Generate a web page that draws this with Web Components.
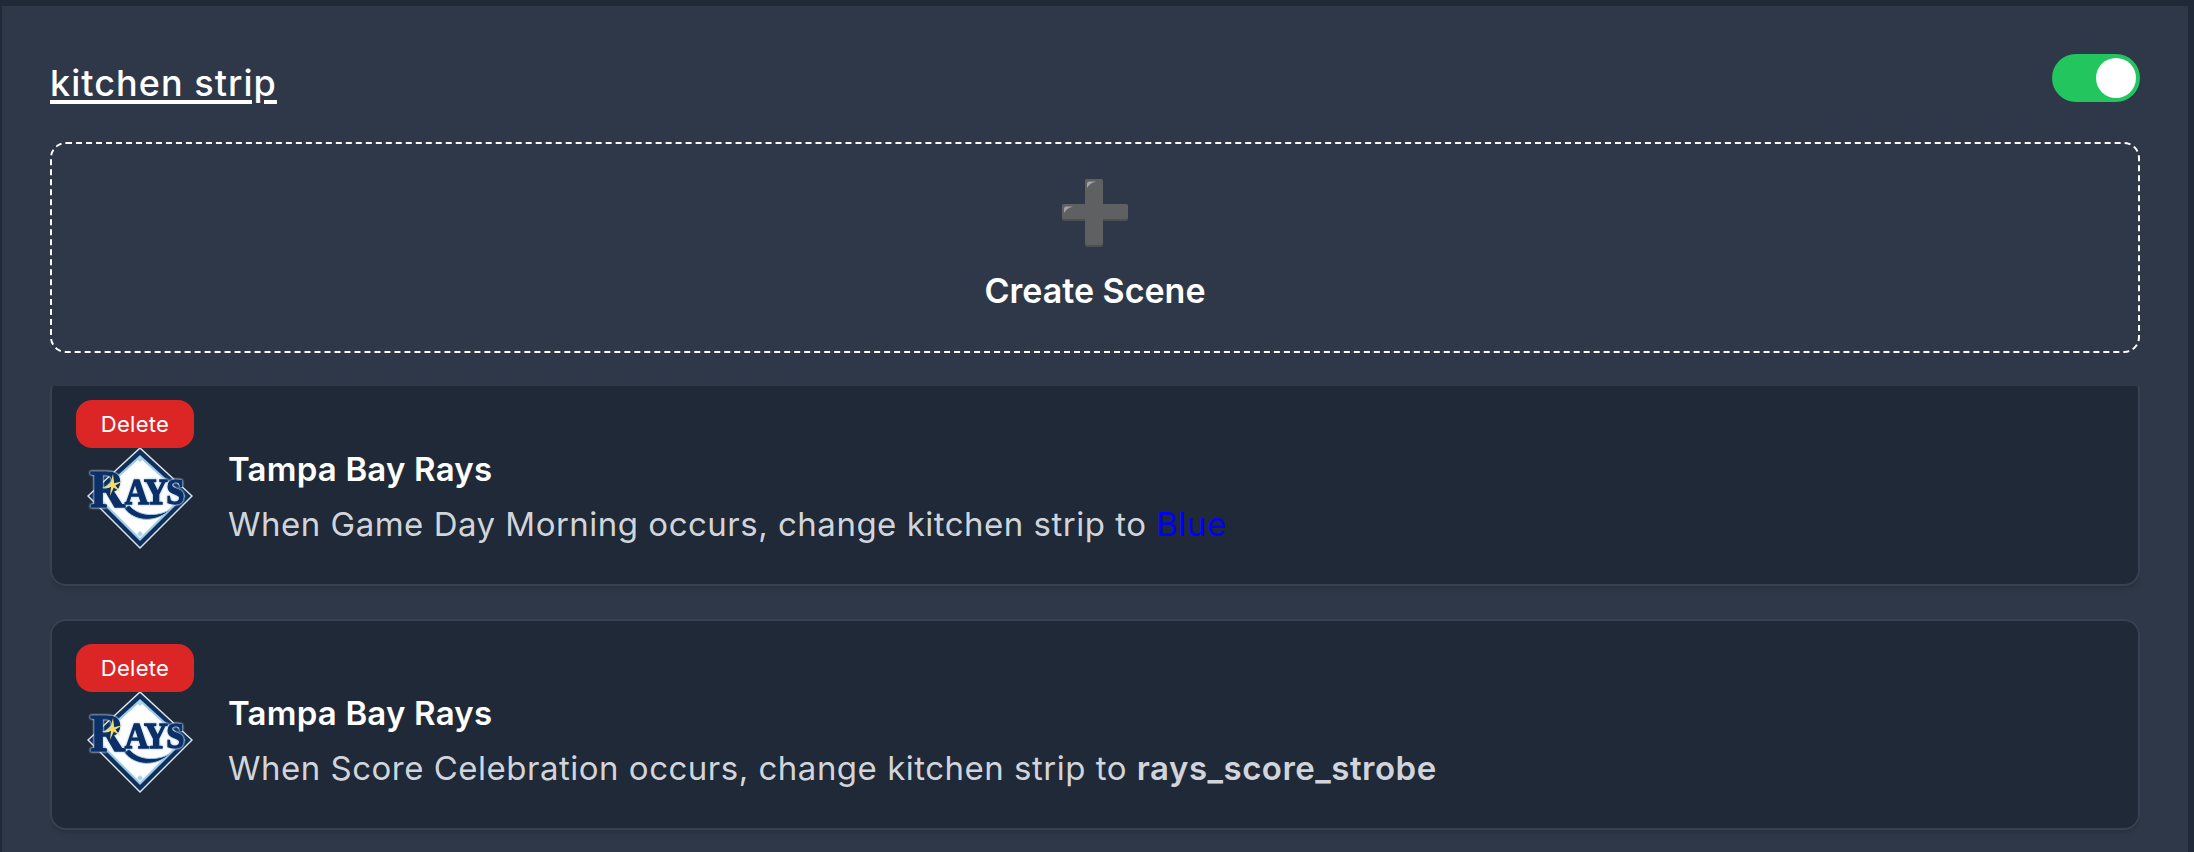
<!DOCTYPE html>
<html>
<head>
<meta charset="utf-8">
<title>kitchen strip</title>
<style>
  html, body { margin: 0; height: 100%; overflow: hidden; background: #1f2937; }
  body { padding: 6px 6px 0 2px; box-sizing: border-box; font-family: Inter, "Noto Sans", sans-serif; }
</style>
</head>
<body>
<device-panel name="kitchen strip">
  <create-scene></create-scene>
  <scene-list>
    <scene-card name="Tampa Bay Rays">When Game Day Morning occurs, change kitchen strip to <span style="color:#0000ff">Blue</span></scene-card>
    <scene-card name="Tampa Bay Rays">When Score Celebration occurs, change kitchen strip to <b style="font-weight:600">rays_score_strobe</b></scene-card>
  </scene-list>
</device-panel>

<script>
const fontStack = 'Inter, "Noto Sans", sans-serif';

class ToggleSwitch extends HTMLElement {
  constructor() {
    super();
    this.attachShadow({ mode: "open" });
    this.shadowRoot.innerHTML = `
      <style>
        :host { display: flex; justify-content: flex-end; align-items: center; box-sizing: border-box; width: 88px; height: 48px; padding-right: 4px; background: #22c55e; border-radius: 24px; }
        .knob { width: 40px; height: 40px; border-radius: 50%; background: #fff; }
      </style>
      <div class="knob"></div>`;
  }
}

class DevicePanel extends HTMLElement {
  constructor() {
    super();
    this.attachShadow({ mode: "open" });
    this.shadowRoot.innerHTML = `
      <style>
        :host { display: block; box-sizing: border-box; height: 846px; padding: 48px 48px 0; background: #2f3849; overflow: hidden; font-family: ${fontStack}; }
        header { display: flex; justify-content: space-between; align-items: center; height: 48px; margin-bottom: 40px; }
        h2 { margin: 10px 0 0; font-size: 36px; font-weight: 500; color: #fff; text-decoration: underline; text-decoration-thickness: 4px; text-underline-offset: 4px; letter-spacing: 1.05px; }
      </style>
      <header><h2></h2><toggle-switch></toggle-switch></header>
      <slot></slot>`;
  }
  connectedCallback() {
    this.shadowRoot.querySelector("h2").textContent = this.getAttribute("name");
  }
}

class CreateScene extends HTMLElement {
  constructor() {
    super();
    this.attachShadow({ mode: "open" });
    this.shadowRoot.innerHTML = `
      <style>
        :host { display: flex; flex-direction: column; align-items: center; box-sizing: border-box; height: 211px; padding-top: 35px; border: 2px dashed #fff; border-radius: 16px; color: #fff; }
        svg { display: block; }
        span { margin-top: 23px; font-size: 34px; font-weight: 600; }
      </style>
      <svg width="66" height="68" viewBox="0 0 66 68">
        <path d="M23 2a2 2 0 0 1 2-2h14a2 2 0 0 1 2 2v23h23a2 2 0 0 1 2 2v13a2 2 0 0 1-2 2H41v24a2 2 0 0 1-2 2H25a2 2 0 0 1-2-2V42H2a2 2 0 0 1-2-2V27a2 2 0 0 1 2-2h21z" fill="#4e4f51"/>
        <path d="M23 2a2 2 0 0 1 2-2h14a2 2 0 0 1 2 2v23h23a2 2 0 0 1 2 2v11a2 2 0 0 1-2 2H41v24a2 2 0 0 1-2 2H25a2 2 0 0 1-2-2V40H2a2 2 0 0 1-2-2V27a2 2 0 0 1 2-2h21z" fill="#5f6062"/>
        <path d="M25 9V5c0-1.500 1-2.500 2.500-2.500H34c-4 1-7 3-9 6.500zM2 34v-4c0-1.500 1-2.500 2.500-2.500H11c-4 1-7 3-9 6.500z" fill="#a3a3a6"/>
      </svg>
      <span>Create Scene</span>`;
  }
}

class SceneList extends HTMLElement {
  constructor() {
    super();
    this.attachShadow({ mode: "open" });
    // the list is scrolled by a few px in the reference, so the first card is cut off
    this.shadowRoot.innerHTML = `
      <style>
        :host { display: block; margin-top: 33px; height: 470px; overflow: hidden; }
        .scroller { display: flex; flex-direction: column; gap: 33px; margin-top: -11px; padding-bottom: 20px; }
      </style>
      <div class="scroller"><slot></slot></div>`;
  }
}

class RaysLogo extends HTMLElement {
  constructor() {
    super();
    this.attachShadow({ mode: "open" });
    this.shadowRoot.innerHTML = `
      <style>
        :host { display: block; width: 120px; height: 120px; flex: none; }
        svg { display: block; }
        text { font-family: "Liberation Serif", serif; font-weight: 700; filter: drop-shadow(0 0 .8px #b5d3ea) drop-shadow(0 0 .6px #b5d3ea); }
      </style>
      <svg width="120" height="120" viewBox="-7 -10 120 120">
        <path d="M53 -1 106 48 53 101 0 48z" fill="#dfe5ec"/>
        <path d="M53 1 104 48 53 99 2 48z" fill="#10305c"/>
        <path d="M53 7 98 48 53 93 8 48z" fill="#9fcbea"/>
        <path d="M53 10 95 48 53 90 11 48z" fill="#fff"/>
        <path d="M53 8l3 3-3 3-3-3zM53 83l3 3-3 3-3-3z" fill="#a9d2ef"/>
        <path d="M37 60C48 75 70 75 84 61 71 69 52 69 42 57z" fill="#0b2f66" stroke="#9fcbea" stroke-width="1"/>
        <text x="3" y="54" transform="scale(1 1.1)" fill="#0b2f66" stroke="#0b2f66" stroke-width="1.2" font-size="48">R<tspan font-size="33" dy="-3" letter-spacing="-1.5">AYS</tspan></text>
        <path d="M26 26l1.200 9.300 8.800-2.300-7.600 4.600 5.600 7-7.200-5-3.800 8.400 1-9-9.200 1 8.400-3.800z" fill="#f6dc63"/>
      </svg>`;
  }
}

class SceneCard extends HTMLElement {
  constructor() {
    super();
    this.attachShadow({ mode: "open" });
    this.shadowRoot.innerHTML = `
      <style>
        :host { display: block; position: relative; box-sizing: border-box; height: 211px; background: #1f2937; border: 2px solid #374151; border-radius: 16px; box-shadow: 0 4px 6px -1px rgba(0,0,0,.1), 0 2px 4px -2px rgba(0,0,0,.1); }
        .delete { position: absolute; left: 24px; top: 23px; box-sizing: border-box; width: 118px; height: 48px; display: flex; align-items: center; justify-content: center; background: #dc2626; border-radius: 16px; color: #fff; font-size: 22px; letter-spacing: .3px; }
        .row { display: flex; align-items: center; gap: 28px; padding: 61px 28px 0; }
        .text { padding-bottom: 3px; }
        .name { font-size: 33px; font-weight: 600; color: #fff; letter-spacing: .2px; }
        .desc { margin-top: 15px; font-size: 33px; color: #d1d5db; letter-spacing: .5px; }
      </style>
      <div class="delete">Delete</div>
      <div class="row">
        <rays-logo></rays-logo>
        <div class="text">
          <div class="name"></div>
          <div class="desc"><slot></slot></div>
        </div>
      </div>`;
  }
  connectedCallback() {
    this.shadowRoot.querySelector(".name").textContent = this.getAttribute("name");
  }
}

customElements.define("toggle-switch", ToggleSwitch);
customElements.define("device-panel", DevicePanel);
customElements.define("create-scene", CreateScene);
customElements.define("scene-list", SceneList);
customElements.define("rays-logo", RaysLogo);
customElements.define("scene-card", SceneCard);
</script>
</body>
</html>
